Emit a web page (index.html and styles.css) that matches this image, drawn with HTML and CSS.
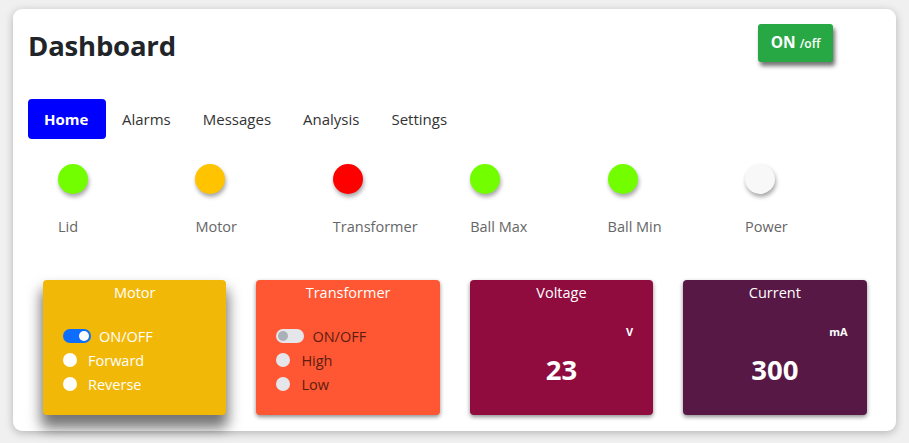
FILE: index.html
```html
<!DOCTYPE html>
<html>
<head>
<meta charset="utf-8">
<link rel="stylesheet" href="styles.css">
</head>
<body>
<div class="card">
  <div class="header">
    <h1 class="title">Dashboard</h1>
    <button class="power-btn">ON <small>/off</small></button>
  </div>
  <nav class="nav">
    <a class="nav-link active">Home</a>
    <a class="nav-link">Alarms</a>
    <a class="nav-link">Messages</a>
    <a class="nav-link">Analysis</a>
    <a class="nav-link">Settings</a>
  </nav>
  <div class="indicators">
    <div class="ind"><span class="dot green"></span><span class="ind-label">Lid</span></div>
    <div class="ind"><span class="dot amber"></span><span class="ind-label">Motor</span></div>
    <div class="ind"><span class="dot red"></span><span class="ind-label">Transformer</span></div>
    <div class="ind"><span class="dot green"></span><span class="ind-label">Ball Max</span></div>
    <div class="ind"><span class="dot green"></span><span class="ind-label">Ball Min</span></div>
    <div class="ind"><span class="dot white"></span><span class="ind-label">Power</span></div>
  </div>
  <div class="tiles">
    <div class="tile motor">
      <div class="tile-title">Motor</div>
      <div class="controls">
        <label class="row"><span class="switch on"><span class="knob"></span></span>ON/OFF</label>
        <label class="row"><span class="radio"></span>Forward</label>
        <label class="row"><span class="radio"></span>Reverse</label>
      </div>
    </div>
    <div class="tile transformer">
      <div class="tile-title">Transformer</div>
      <div class="controls dark">
        <label class="row"><span class="switch off"><span class="knob"></span></span>ON/OFF</label>
        <label class="row"><span class="radio grey"></span>High</label>
        <label class="row"><span class="radio grey"></span>Low</label>
      </div>
    </div>
    <div class="tile voltage">
      <div class="tile-title">Voltage</div>
      <div class="unit unit-v">V</div>
      <div class="value">23</div>
    </div>
    <div class="tile current">
      <div class="tile-title">Current</div>
      <div class="unit unit-ma">mA</div>
      <div class="value">300</div>
    </div>
  </div>
</div>
</body>
</html>
```
FILE: styles.css
```css
* { box-sizing: border-box; }
html, body { margin: 0; }
body {
  background: #f0f0f0;
  padding: 9px 13px 12px 13px;
  font-family: "Open Sans", "Noto Sans", sans-serif;
  color: #212529;
}
.card {
  background: #fff;
  width: 883px;
  height: 422px;
  border-radius: 9px;
  box-shadow: 0 2px 8px rgba(0,0,0,0.25);
  padding: 15px 16px 0 15px;
}
.header {
  display: flex;
  justify-content: space-between;
  align-items: flex-start;
  height: 75px;
}
.title {
  margin: 0;
  margin-top: 4px;
  font-size: 27.5px;
  font-weight: 700;
  line-height: 36px;
  letter-spacing: -0.2px;
}
.power-btn {
  margin-top: 0;
  margin-right: 47px;
  width: 75px;
  height: 38px;
  background: #28a745;
  color: #fff;
  border: none;
  border-radius: 3px;
  font-family: inherit;
  font-weight: 700;
  font-size: 15.5px;
  box-shadow: 2px 4px 4px rgba(0,0,0,0.55);
  padding: 0 0 2px 0;
}
.power-btn small { font-size: 12px; font-weight: 600; }
.nav {
  display: flex;
  height: 40px;
}
.nav-link {
  display: block;
  padding: 8px 16px;
  font-size: 15px;
  line-height: 24px;
  color: #333;
  border-radius: 4px;
}
.nav-link.active {
  background: #0000ff;
  color: #fff;
  font-weight: 700;
  width: 78px;
}
.indicators {
  display: flex;
  padding-left: 30px;
  margin-top: 25px;
}
.ind {
  width: 137.4px;
  flex: none;
  display: flex;
  flex-direction: column;
  align-items: flex-start;
}
.dot {
  width: 30px;
  height: 30px;
  border-radius: 50%;
  box-shadow: 1px 3px 4px rgba(0,0,0,0.35);
}
.dot.green { background: #73fe00; }
.dot.amber { background: #ffc300; }
.dot.red { background: #ff0000; }
.dot.white { background: #f8f8f8; }
.ind-label {
  margin-top: 22px;
  font-size: 14.5px;
  line-height: 22px;
  color: #666;
}
.tiles {
  display: flex;
  gap: 30px;
  padding-left: 15px;
  margin-top: 42px;
}
.tile {
  width: 183.4px;
  flex: none;
  height: 135px;
  border-radius: 4px;
  color: #fff;
  box-shadow: 0 2px 4px rgba(0,0,0,0.45);
}
.tile.motor { background: #f2b807; box-shadow: 0 11px 14px 2px rgba(0,0,0,0.55); }
.tile.transformer { background: #ff5733; }
.tile.voltage { background: #900c3f; }
.tile.current { background: #581845; }
.tile-title {
  text-align: center;
  font-size: 14.5px;
  line-height: 24px;
  padding-top: 1px;
}
.controls {
  padding: 19px 0 0 20px;
  font-size: 14.5px;
}
.controls.dark { color: #5c1d10; }
.row {
  display: flex;
  align-items: center;
  height: 24px;
}
.switch {
  width: 28px;
  height: 14px;
  border-radius: 7px;
  margin-right: 8px;
  position: relative;
  display: inline-block;
}
.switch.on { background: #0d6efd; }
.switch.off { background: #e4e6ea; }
.knob {
  position: absolute;
  top: 2px;
  width: 10px;
  height: 10px;
  border-radius: 50%;
}
.switch.on .knob { right: 2px; background: #fff; }
.switch.off .knob { left: 2px; background: #aab0b8; }
.radio {
  width: 14px;
  height: 14px;
  border-radius: 50%;
  background: #fff;
  margin-right: 11px;
  display: inline-block;
}
.radio.grey { background: #e4e6ea; }
.unit {
  text-align: right;
  font-size: 11px;
  font-weight: 700;
  margin-top: 19px;
  line-height: 16px;
}
.unit-v { padding-right: 20px; }
.unit-ma { padding-right: 19px; }
.value {
  text-align: center;
  font-size: 27.5px;
  font-weight: 700;
  margin-top: 13px;
  line-height: 34px;
}
```
